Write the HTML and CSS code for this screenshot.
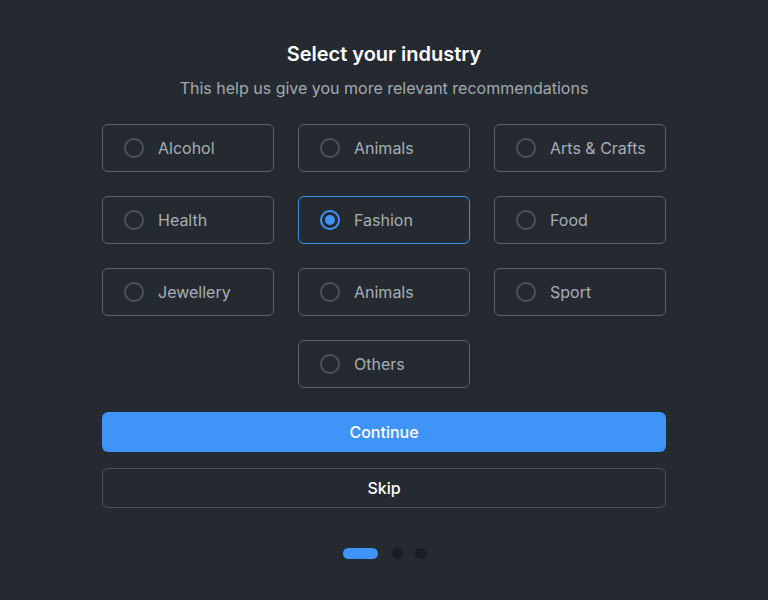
FILE: index.html
```html
<!DOCTYPE html>
<html>
<head>
<meta charset="utf-8">
<link rel="stylesheet" href="styles.css">
</head>
<body>
<main class="page">
  <h1 class="title">Select your industry</h1>
  <p class="subtitle">This help us give you more relevant recommendations</p>
  <div class="grid">
    <label class="option"><span class="radio"></span><span class="label">Alcohol</span></label>
    <label class="option"><span class="radio"></span><span class="label">Animals</span></label>
    <label class="option"><span class="radio"></span><span class="label">Arts &amp; Crafts</span></label>
    <label class="option"><span class="radio"></span><span class="label">Health</span></label>
    <label class="option selected"><span class="radio"></span><span class="label">Fashion</span></label>
    <label class="option"><span class="radio"></span><span class="label">Food</span></label>
    <label class="option"><span class="radio"></span><span class="label">Jewellery</span></label>
    <label class="option"><span class="radio"></span><span class="label">Animals</span></label>
    <label class="option"><span class="radio"></span><span class="label">Sport</span></label>
    <label class="option center"><span class="radio"></span><span class="label">Others</span></label>
  </div>
  <button class="btn primary">Continue</button>
  <button class="btn secondary">Skip</button>
  <div class="dots">
    <span class="dot active"></span>
    <span class="dot"></span>
    <span class="dot"></span>
  </div>
</main>
</body>
</html>
```

FILE: styles.css
```css
html, body {
  margin: 0;
  padding: 0;
  background: #252a31;
}
body {
  font-family: Inter, "Noto Sans", sans-serif;
  width: 768px;
  height: 600px;
  overflow: hidden;
}
.page {
  width: 564px;
  margin: 0 auto;
  padding-top: 42px;
  display: flex;
  flex-direction: column;
  align-items: stretch;
}
.title {
  margin: 0;
  font-size: 20px;
  line-height: 24px;
  font-weight: 600;
  color: #ffffff;
  text-align: center;
}
.subtitle {
  margin: 10px 0 0;
  font-size: 16px;
  line-height: 24px;
  color: #a3a9b1;
  text-align: center;
}
.grid {
  margin-top: 24px;
  display: grid;
  grid-template-columns: repeat(3, 172px);
  column-gap: 24px;
  row-gap: 24px;
}
.option {
  box-sizing: border-box;
  height: 48px;
  border: 1px solid #5e646b;
  border-radius: 6px;
  display: flex;
  align-items: center;
  padding-left: 21px;
  gap: 14px;
}
.option.center {
  grid-column: 2;
}
.radio {
  box-sizing: border-box;
  width: 20px;
  height: 20px;
  border: 2px solid #4b525a;
  border-radius: 50%;
  display: flex;
  align-items: center;
  justify-content: center;
}
.label {
  font-size: 16px;
  color: #a8aeb5;
}
.option.selected {
  border-color: #3e8fe9;
}
.option.selected .radio {
  border-color: #4194f7;
}
.option.selected .radio::after {
  content: "";
  width: 10px;
  height: 10px;
  border-radius: 50%;
  background: #4194f7;
}
.btn {
  box-sizing: border-box;
  width: 564px;
  height: 40px;
  border-radius: 6px;
  font-family: Inter, "Noto Sans", sans-serif;
  font-size: 16px;
  font-weight: 500;
  color: #ffffff;
  cursor: pointer;
}
.btn.primary {
  margin-top: 24px;
  background: #4194f7;
  border: none;
}
.btn.secondary {
  margin-top: 16px;
  background: transparent;
  border: 1px solid #4a5058;
}
.dots {
  margin-top: 40px;
  display: flex;
  justify-content: center;
  align-items: center;
  gap: 12px;
}
.dot {
  width: 11px;
  height: 11px;
  border-radius: 50%;
  background: #181c21;
}
.dot.active {
  width: 35px;
  border-radius: 6px;
  background: #4194f7;
  margin-right: 2px;
}
```
